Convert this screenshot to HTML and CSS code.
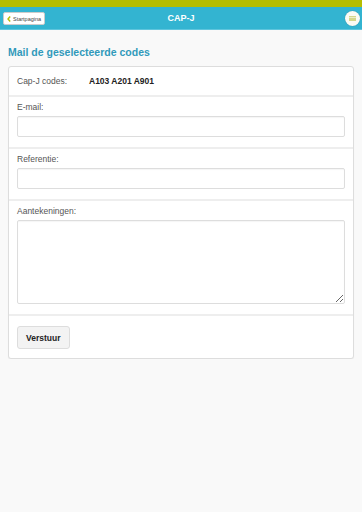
FILE: index.html
```html
<!DOCTYPE html>
<html lang="nl">
<head>
  <meta charset="UTF-8">
  <meta name="viewport" content="width=device-width, initial-scale=1.0">
  <title>CAP-J</title>
  <link rel="stylesheet" href="styles.css">
</head>
<body>
  <div class="topbar"></div>
  <div class="header">
    <a class="back-btn" href="#">
      <svg class="chevron" width="4" height="6" viewBox="0 0 4 6"><path d="M3.2 0.5 L1 3 L3.2 5.5" fill="none" stroke="#b5bd00" stroke-width="1.4"/></svg>
      Startpagina
    </a>
    <span class="title">CAP-J</span>
    <a class="menu-btn" href="#">
      <span class="menu-lines"></span>
    </a>
  </div>

  <div class="content">
    <h2 class="page-title">Mail de geselecteerde codes</h2>
    <form class="card">
      <div class="row codes-row">
        <span class="codes-label">Cap-J codes:</span>
        <strong class="codes">A103 A201 A901</strong>
      </div>
      <div class="row">
        <label for="email">E-mail:</label>
        <input id="email" type="text">
      </div>
      <div class="row">
        <label for="ref">Referentie:</label>
        <input id="ref" type="text">
      </div>
      <div class="row">
        <label for="notes">Aantekeningen:</label>
        <textarea id="notes"></textarea>
      </div>
      <div class="row button-row">
        <button type="button" class="send-btn">Verstuur</button>
      </div>
    </form>
  </div>
</body>
</html>
```

FILE: styles.css
```css
body {
  font-family: "Liberation Sans", Arial, sans-serif;
  background-color: #f9f9f9;
  margin: 0;
  padding: 0;
  color: #333;
}
.topbar {
  height: 7px;
  background-color: #b5bd00;
}
.header {
  height: 22px;
  background-color: #33b4d1;
  border-bottom: 1px solid #5fc5dd;
  display: flex;
  align-items: center;
  justify-content: space-between;
  padding: 0 2px 0 3px;
  position: relative;
}
.back-btn {
  display: flex;
  align-items: center;
  gap: 2px;
  height: 11px;
  padding: 0 3px 0 3px;
  background: #fff;
  border: 1px solid #ccc;
  border-radius: 2px;
  font-size: 5.5px;
  color: #444;
  text-decoration: none;
  margin-top: 1px;
}
.title {
  position: absolute;
  left: 0;
  right: 0;
  text-align: center;
  color: #fff;
  font-weight: bold;
  font-size: 9px;
  pointer-events: none;
}
.menu-btn {
  width: 15px;
  height: 15px;
  border-radius: 50%;
  background: #fbfbf4;
  display: flex;
  align-items: center;
  justify-content: center;
  margin-top: 1px;
  box-shadow: 0 0 1px rgba(0,0,0,0.3);
}
.menu-lines {
  width: 7px;
  height: 5px;
  background: linear-gradient(#d4d78a 0 1.5px, #ecedc8 1.5px 2px, #d4d78a 2px 3px, #ecedc8 3px 3.5px, #d4d78a 3.5px 5px);
}
.content {
  padding: 0 8px;
}
.page-title {
  color: #3199bb;
  font-size: 10.5px;
  font-weight: bold;
  margin: 0;
  padding: 16px 0 8px 0;
  line-height: 12px;
}
.card {
  background: #fff;
  border: 1px solid #ddd;
  border-radius: 3px;
  box-shadow: 0 1px 1px rgba(0,0,0,0.05);
  margin: 0;
}
.row {
  display: flex;
  flex-direction: column;
  padding: 5px 8px 10px 8px;
  border-top: 2px solid #eee;
}
.row:first-child {
  border-top: none;
}
.row label {
  font-size: 8.5px;
  line-height: 10px;
  color: #555;
  margin-bottom: 4px;
}
.codes-row {
  flex-direction: row;
  align-items: center;
  padding: 9px 8px 9px 8px;
  font-size: 8.5px;
  line-height: 10px;
}
.codes-label {
  width: 72px;
  color: #555;
}
.codes {
  color: #222;
}
input,
textarea {
  box-sizing: border-box;
  width: 100%;
  border: 1px solid #ddd;
  border-radius: 2px;
  box-shadow: inset 0 1px 1px rgba(0,0,0,0.04);
  margin: 0;
  font-family: inherit;
}
input {
  height: 21px;
}
textarea {
  height: 84px;
  resize: vertical;
  display: block;
}
.button-row {
  flex-direction: row;
  padding: 10px 8px 9px 8px;
}
.send-btn {
  height: 23px;
  padding: 0 8px;
  background: #f3f3f3;
  border: 1px solid #ddd;
  border-radius: 3px;
  font-family: inherit;
  font-size: 8.5px;
  font-weight: bold;
  color: #222;
}
```
